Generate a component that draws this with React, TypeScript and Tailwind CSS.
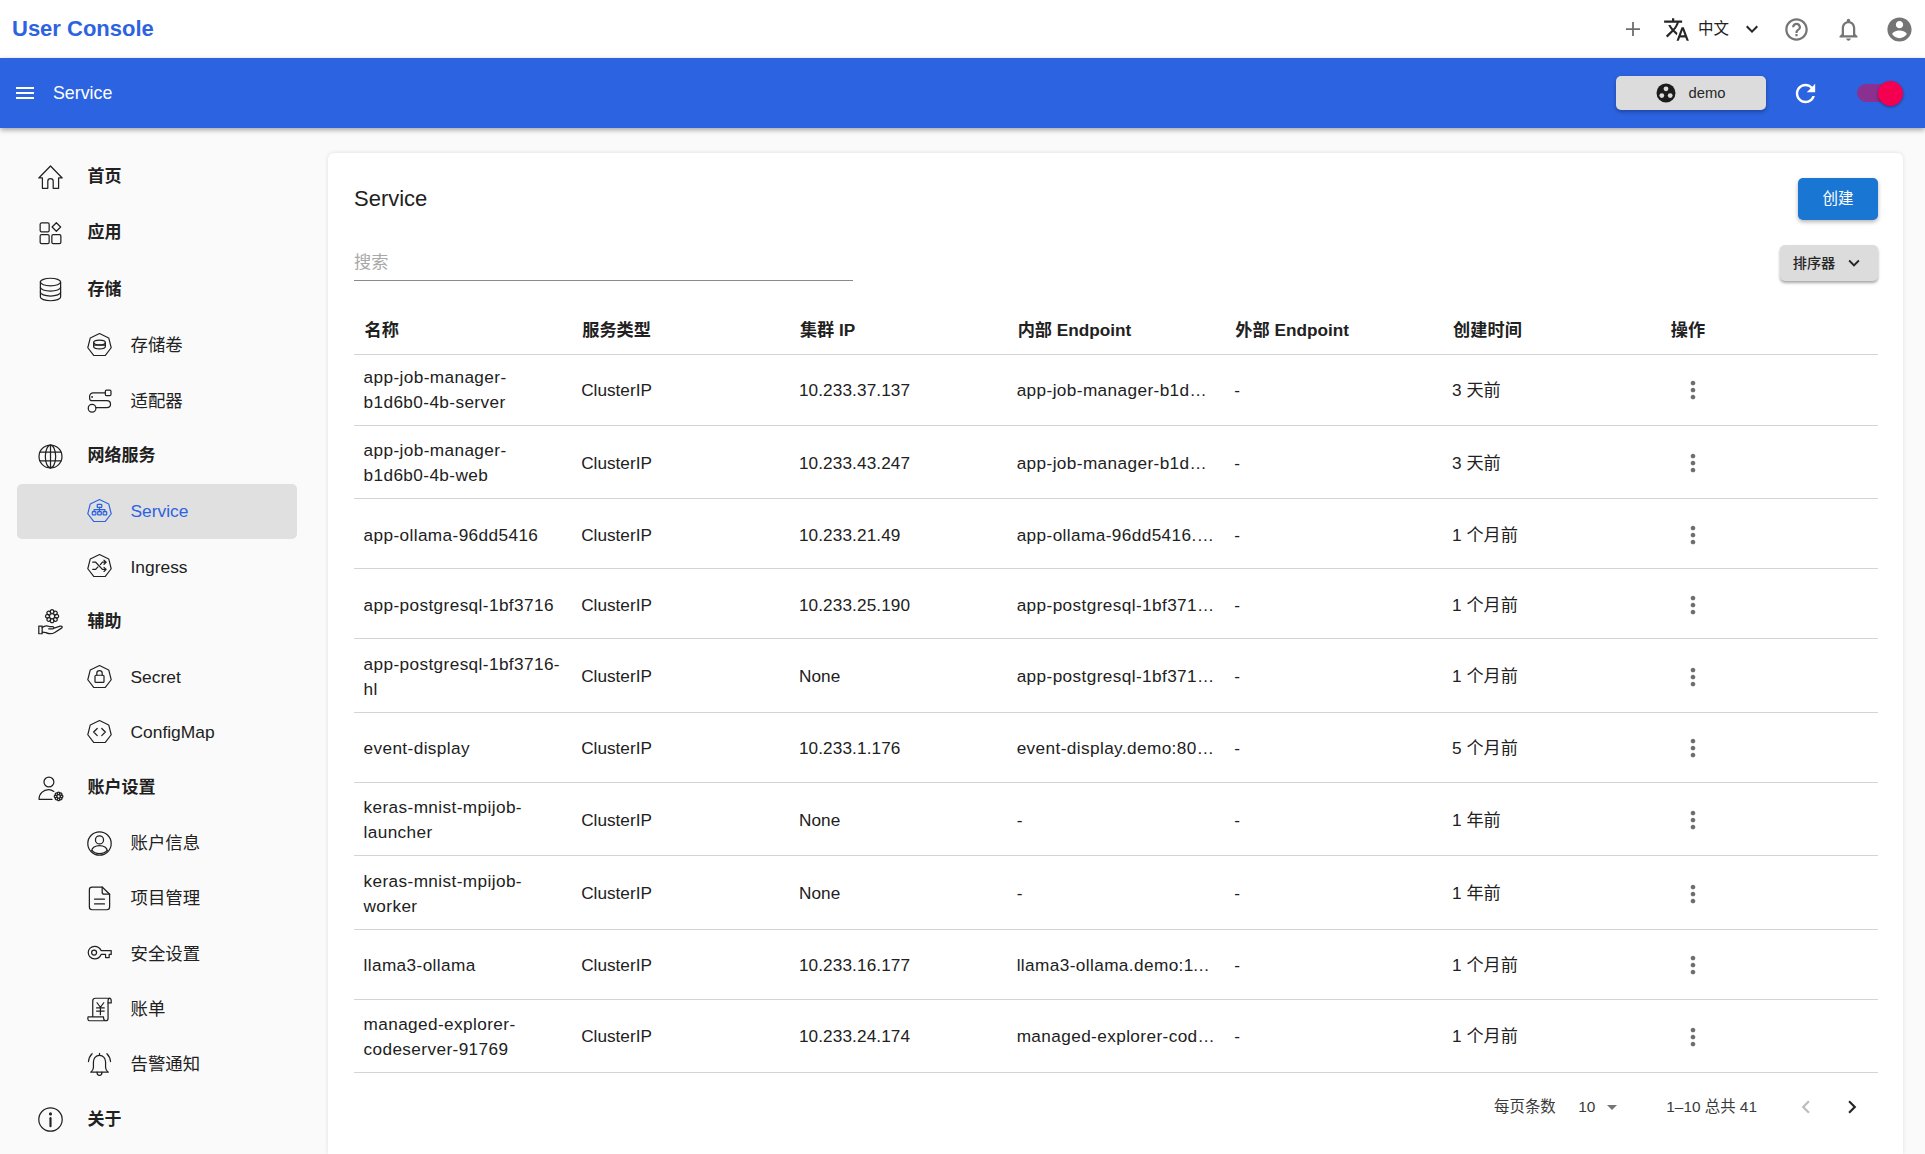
import React from "react";

const FONT = "font-['Liberation_Sans','Noto_Sans_CJK_SC',sans-serif]";

const Mui = ({ d, size = 24, className = "" }: { d: string; size?: number; className?: string }) => (
  <svg width={size} height={size} viewBox="0 0 24 24" fill="currentColor" className={`shrink-0 ${className}`}>
    <path d={d} />
  </svg>
);

const P = {
  menu: "M3 18h18v-2H3v2zm0-5h18v-2H3v2zm0-7v2h18V6H3z",
  plus: "M19 13.1h-6.1V19h-1.8v-5.9H5v-1.8h6.1V5h1.8v6.3H19z",
  translate:
    "M12.87 15.07l-2.54-2.51.03-.03c1.74-1.94 2.98-4.17 3.71-6.53H17V4h-7V2H8v2H1v1.99h11.17C11.5 7.92 10.44 9.75 9 11.35 8.07 10.32 7.3 9.19 6.69 8h-2c.73 1.63 1.73 3.17 2.98 4.56l-5.09 5.02L4 19l5-5 3.11 3.11.76-2.04zM18.5 10h-2L12 22h2l1.12-3h4.75L21 22h2l-4.5-12zm-2.62 7l1.62-4.33L19.12 17h-3.24z",
  expand: "M16.59 8.59L12 13.17 7.41 8.59 6 10l6 6 6-6z",
  help: "M11 18h2v-2h-2v2zm1-16C6.48 2 2 6.48 2 12s4.48 10 10 10 10-4.48 10-10S17.52 2 12 2zm0 18c-4.41 0-8-3.59-8-8s3.59-8 8-8 8 3.59 8 8-3.59 8-8 8zm0-14c-2.21 0-4 1.79-4 4h2c0-1.1.9-2 2-2s2 .9 2 2c0 2-3 1.75-3 5h2c0-2.25 3-2.5 3-5 0-2.21-1.79-4-4-4z",
  bell: "M12 22c1.1 0 2-.9 2-2h-4c0 1.1.89 2 2 2zm6-6v-5c0-3.07-1.64-5.64-4.5-6.32V4c0-.83-.67-1.5-1.5-1.5s-1.5.67-1.5 1.5v.68C7.63 5.36 6 7.92 6 11v5l-2 2v1h16v-1l-2-2zm-2 1H8v-6c0-2.48 1.51-4.5 4-4.5s4 2.02 4 4.5v6z",
  account:
    "M12 2C6.48 2 2 6.48 2 12s4.48 10 10 10 10-4.48 10-10S17.52 2 12 2zm0 3c1.66 0 3 1.34 3 3s-1.34 3-3 3-3-1.34-3-3 1.34-3 3-3zm0 14.2c-2.5 0-4.71-1.28-6-3.22.03-1.99 4-3.08 6-3.08 1.99 0 5.97 1.09 6 3.08-1.29 1.94-3.5 3.22-6 3.22z",
  refresh:
    "M17.65 6.35C16.2 4.9 14.21 4 12 4c-4.42 0-7.99 3.58-7.99 8s3.57 8 7.99 8c3.73 0 6.84-2.55 7.73-6h-2.08c-.82 2.33-3.04 4-5.65 4-3.31 0-6-2.69-6-6s2.69-6 6-6c1.66 0 3.14.69 4.22 1.78L13 11h7V4l-2.35 2.35z",
  more: "M12 8c1.1 0 2-.9 2-2s-.9-2-2-2-2 .9-2 2 .9 2 2 2zm0 2c-1.1 0-2 .9-2 2s.9 2 2 2 2-.9 2-2-.9-2-2-2zm0 6c-1.1 0-2 .9-2 2s.9 2 2 2 2-.9 2-2-.9-2-2-2z",
  drop: "M7 10l5 5 5-5z",
  prev: "M15.41 7.41L14 6l-6 6 6 6 1.41-1.41L10.83 12z",
  next: "M10 6L8.59 7.41 13.17 12l-4.58 4.59L10 18l6-6z",
};

const Line = ({ children, size = 27 }: { children: React.ReactNode; size?: number }) => (
  <svg
    width={size}
    height={size}
    viewBox="0 0 24 24"
    fill="none"
    stroke="currentColor"
    strokeWidth={1.1}
    strokeLinecap="round"
    strokeLinejoin="round"
    className="shrink-0"
  >
    {children}
  </svg>
);

const Hepta = () => <path d="M12 1.4 20.2 5.3 22.4 14 17 20.9 7 20.9 1.6 14 3.8 5.3Z" strokeWidth={1.05} />;

const Gear = ({ cx, cy, r }: { cx: number; cy: number; r: number }) => (
  <g>
    <circle cx={cx} cy={cy} r={r * 0.4} />
    {[0, 45, 90, 135, 180, 225, 270, 315].map((a) => (
      <path
        key={a}
        d={`M${cx + r * 0.55 * Math.cos(((a - 20) * Math.PI) / 180)} ${cy + r * 0.55 * Math.sin(((a - 20) * Math.PI) / 180)}A${r * 0.28} ${r * 0.28} 0 1 1 ${cx + r * 0.55 * Math.cos(((a + 20) * Math.PI) / 180)} ${cy + r * 0.55 * Math.sin(((a + 20) * Math.PI) / 180)}`}
      />
    ))}
  </g>
);

const icons: Record<string, React.ReactNode> = {
  home: (
    <Line>
      <path d="M12 1.8 1.6 12.4H4.8V21.6H9.6V15.4a2.4 2.4 0 0 1 4.8 0V21.6H19.2V12.4H22.4Z" />
    </Line>
  ),
  apps: (
    <Line>
      <rect x="2.8" y="2.6" width="8" height="8" rx="1.2" />
      <rect x="2.8" y="13" width="8" height="8" rx="1.2" />
      <rect x="13.2" y="13" width="8" height="8" rx="1.2" />
      <path d="M17.2 2.4 21 6.2 17.2 10 13.4 6.2Z" />
    </Line>
  ),
  db: (
    <Line>
      <ellipse cx="12" cy="5.4" rx="9" ry="3.4" />
      <path d="M3 5.4V18.6C3 20.5 7 22 12 22s9-1.5 9-3.4V5.4" />
      <path d="M3 10C3 11.9 7 13.4 12 13.4s9-1.5 9-3.4" />
      <path d="M3 14.4C3 16.3 7 17.8 12 17.8s9-1.5 9-3.4" />
    </Line>
  ),
  pv: (
    <Line>
      <Hepta />
      <ellipse cx="12" cy="9.4" rx="5.2" ry="2.1" />
      <path d="M6.8 9.4v3.4c0 1.2 2.3 2.1 5.2 2.1s5.2-.9 5.2-2.1V9.4" />
      <path d="M6.8 11.6h10.4" />
    </Line>
  ),
  adapter: (
    <Line>
      <rect x="17.2" y="1.8" width="5" height="5" rx="1" />
      <path d="M17.2 4.3H6.4a3.2 3.2 0 0 0-3.2 3.2V9c0 1.2 1 2.2 2.2 2.2H18.4c1.9 0 3.4 1.4 3.4 3.2s-1.5 3-3.4 3H8.8" />
      <circle cx="5.4" cy="18" r="3.4" />
      <circle cx="5.4" cy="8" r=".3" />
    </Line>
  ),
  globe: (
    <Line>
      <circle cx="12" cy="12" r="10.2" />
      <ellipse cx="12" cy="12" rx="4.6" ry="10.2" />
      <path d="M12 1.8V22.2M2.6 8.2H21.4M2.6 15.8H21.4" />
    </Line>
  ),
  service: (
    <Line>
      <Hepta />
      <rect x="10" y="5.6" width="4" height="2.8" rx=".5" />
      <rect x="5.6" y="12.2" width="3.2" height="2.8" rx=".5" />
      <rect x="10.4" y="12.2" width="3.2" height="2.8" rx=".5" />
      <rect x="15.2" y="12.2" width="3.2" height="2.8" rx=".5" />
      <path d="M12 8.4V12.2M7.2 12.2V10.3H16.8V12.2" />
    </Line>
  ),
  ingress: (
    <Line>
      <Hepta />
      <path d="M6 8.2H8.6L14.6 14.6H17.8M6 14.6H8.6L10.6 12.4M12.8 10.4 14.6 8.2H17.8M16 6.4 17.9 8.2 16 10M16 12.8 17.9 14.6 16 16.4" />
    </Line>
  ),
  hand: (
    <Line>
      <Gear cx={13.4} cy={6.4} r={5.8} />
      <path d="M1.6 15.2H4.6V22H1.6Z" />
      <path d="M4.6 16.4C6.8 14.6 9 14.6 11 15.6H14C15.2 15.6 15.2 17.6 14 17.6H10.4M14.6 17.2 20.6 15.2C22.4 14.8 23 16.2 21.8 17L15.8 20.8C13.2 22.4 10 22 8 21L4.6 20.6" />
    </Line>
  ),
  secret: (
    <Line>
      <Hepta />
      <rect x="8" y="10" width="8" height="6.4" rx=".8" />
      <path d="M9.6 10V8.2a2.4 2.4 0 0 1 4.8 0V10" />
    </Line>
  ),
  config: (
    <Line>
      <Hepta />
      <path d="M10 8.4 6.8 11.6 10 14.8M14 8.4 17.2 11.6 14 14.8" />
    </Line>
  ),
  userGear: (
    <Line>
      <circle cx="10.6" cy="6.2" r="4.4" />
      <path d="M15 14.6C13.6 13.6 12 13 10.4 13 5.6 13 1.8 16.6 1.8 21.6H13.4" />
      <Gear cx={19.2} cy={19} r={3.8} />
    </Line>
  ),
  userCircle: (
    <Line>
      <circle cx="12" cy="12" r="10.4" />
      <circle cx="12" cy="8.8" r="3.6" />
      <path d="M5.2 18.2C5.2 15.8 8.2 13.8 12 13.8s6.8 2 6.8 4.4" />
      <path d="M5.2 18.2C7 20.4 9.4 21 12 21s5-.6 6.8-2.8" />
    </Line>
  ),
  file: (
    <Line>
      <path d="M14.4 1.8H5.4C4 1.8 3 2.8 3 4.2V19.6C3 21 4 22 5.4 22H18.6C20 22 21 21 21 19.6V8.2Z" />
      <path d="M14.4 1.8V6.4C14.4 7.4 15.2 8.2 16.2 8.2H21" />
      <path d="M7.6 12.6H16.4M7.6 16.8H16.4" />
    </Line>
  ),
  key: (
    <Line>
      <path d="M13.4 9.4H22.4V12.8H20.6V15.6H17.4V12.8H13.4C12.4 15.2 10.2 16.8 7.6 16.8A5.6 5.6 0 0 1 7.6 5.6C10.2 5.6 12.4 7 13.4 9.4Z" />
      <circle cx="7.2" cy="11.2" r="2.2" />
    </Line>
  ),
  bill: (
    <Line>
      <path d="M6 18.6V4.4C6 3 7 2 8.4 2H21.6C20.4 2 19.6 3 19.6 4.2V20C19.6 21.2 18.6 22 17.4 22H3C1.8 22 1.4 20.4 1.8 18.6H15.6C15.4 20 15.8 21.6 17.4 22" />
      <path d="M19.6 6.2H22.4V4.2C22.4 3 21.6 2 20.8 2" />
      <path d="M9.8 6 12.8 10 15.8 6M9.4 10.6H16.2M9.4 13.4H16.2M12.8 10V16.6" />
    </Line>
  ),
  alarm: (
    <Line>
      <path d="M12 3.8C8.6 3.8 6.6 6.6 6.6 9.8V14.6C6.6 16.4 5.6 17.6 4.2 18.8H19.8C18.4 17.6 17.4 16.4 17.4 14.6V9.8C17.4 6.6 15.4 3.8 12 3.8Z" />
      <path d="M12 2.2V3.8M9.8 18.8C9.8 22.6 14.2 22.6 14.2 18.8" />
      <path d="M5.4 2.4C3.4 4.4 2.4 6.8 2.2 9.4M18.6 2.4C20.6 4.4 21.6 6.8 21.8 9.4" />
    </Line>
  ),
  info: (
    <Line>
      <circle cx="12" cy="12" r="10.4" />
      <path d="M12 10.8V18" strokeWidth={1.9} />
      <circle cx="12" cy="7" r=".7" strokeWidth={1.3} />
    </Line>
  ),
};

type Item = { label: string; icon: string; sub?: boolean; active?: boolean; tall?: boolean };

const nav: Item[] = [
  { label: "首页", icon: "home", tall: true },
  { label: "应用", icon: "apps", tall: true },
  { label: "存储", icon: "db", tall: true },
  { label: "存储卷", icon: "pv", sub: true },
  { label: "适配器", icon: "adapter", sub: true },
  { label: "网络服务", icon: "globe" },
  { label: "Service", icon: "service", sub: true, active: true },
  { label: "Ingress", icon: "ingress", sub: true },
  { label: "辅助", icon: "hand" },
  { label: "Secret", icon: "secret", sub: true },
  { label: "ConfigMap", icon: "config", sub: true },
  { label: "账户设置", icon: "userGear" },
  { label: "账户信息", icon: "userCircle", sub: true },
  { label: "项目管理", icon: "file", sub: true },
  { label: "安全设置", icon: "key", sub: true },
  { label: "账单", icon: "bill", sub: true },
  { label: "告警通知", icon: "alarm", sub: true },
  { label: "关于", icon: "info" },
];

const rows = [
  ["app-job-manager-b1d6b0-4b-server", "10.233.37.137", "app-job-manager-b1d6b0-4b-server.demo:8080", "3 天前"],
  ["app-job-manager-b1d6b0-4b-web", "10.233.43.247", "app-job-manager-b1d6b0-4b-web.demo:8080", "3 天前"],
  ["app-ollama-96dd5416", "10.233.21.49", "app-ollama-96dd5416.demo:11434", "1 个月前"],
  ["app-postgresql-1bf3716", "10.233.25.190", "app-postgresql-1bf3716.demo:5432", "1 个月前"],
  ["app-postgresql-1bf3716-hl", "None", "app-postgresql-1bf3716-hl.demo:5432", "1 个月前"],
  ["event-display", "10.233.1.176", "event-display.demo:80.svc.cluster", "5 个月前"],
  ["keras-mnist-mpijob-launcher", "None", "-", "1 年前"],
  ["keras-mnist-mpijob-worker", "None", "-", "1 年前"],
  ["llama3-ollama", "10.233.16.177", "llama3-ollama.demo:11434", "1 个月前"],
  ["managed-explorer-codeserver-91769", "10.233.24.174", "managed-explorer-codeserver-91769.demo:80", "1 个月前"],
];

const heads = ["名称", "服务类型", "集群 IP", "内部 Endpoint", "外部 Endpoint", "创建时间", "操作"];

export default function App() {
  return (
    <div className={`${FONT} h-screen overflow-hidden bg-[#fafafa] text-[17.2px] leading-[24.6px] text-[#212121] flex flex-col`}>
      {/* top bar */}
      <header className="h-[58px] bg-white flex items-center pl-[12px] pr-[11px] shrink-0">
        <span className="text-[22px] font-bold text-[#2c63e0]">User Console</span>
        <div className="ml-auto flex items-center">
          <Mui d={P.plus} size={24} className="text-[#6e6e6e]" />
          <Mui d={P.translate} size={27} className="text-[#262626] ml-[18px]" />
          <span className="text-[15.5px] ml-[8px]">中文</span>
          <Mui d={P.expand} size={24} className="text-[#262626] ml-[11px]" />
          <Mui d={P.help} size={27} className="text-[#757575] ml-[19px]" />
          <Mui d={P.bell} size={27} className="text-[#757575] ml-[25px]" />
          <Mui d={P.account} size={29} className="text-[#757575] ml-[23px]" />
        </div>
      </header>

      {/* blue bar */}
      <div className="relative z-10 h-[70px] bg-[#2c63e0] text-white flex items-center pl-[13px] pr-[22px] shrink-0 shadow-[0_2px_5px_rgba(0,0,0,0.35)]">
        <Mui d={P.menu} size={24} />
        <span className="ml-[16px] text-[17.8px]">Service</span>
        <button className="ml-auto w-[150px] h-[34px] rounded-[5px] bg-[#dcdcdc] text-[#262626] flex items-center justify-center gap-[12px] text-[14.8px] shadow-[0_2px_4px_rgba(0,0,0,0.3)]">
          <svg width="20" height="20" viewBox="0 0 20 20" className="shrink-0">
            <circle cx="10" cy="10" r="9.5" fill="#1c1c1c" />
            <circle cx="10" cy="5.8" r="2.4" fill="#dcdcdc" />
            <circle cx="5.8" cy="12.6" r="2.4" fill="#dcdcdc" />
            <circle cx="14.2" cy="12.6" r="2.4" fill="#dcdcdc" />
          </svg>
          demo
        </button>
        <Mui d={P.refresh} size={29} className="ml-[25px]" />
        <div className="relative ml-[37px] w-[46px] h-[18px] rounded-full bg-[#8b3090]">
          <span className="absolute right-0 top-[-3.5px] w-[25px] h-[25px] rounded-full bg-[#f50050] shadow-[0_1px_3px_rgba(0,0,0,0.4)]" />
        </div>
      </div>

      <div className="flex flex-1 min-h-0">
        {/* sidebar */}
        <nav className="w-[328px] shrink-0 pt-[21.5px]">
          {nav.map((it) => (
            <div
              key={it.label}
              className={`flex items-center ${it.tall ? "h-[56.2px]" : "h-[55.3px]"} ${
                it.sub ? "ml-[17px] w-[280px] pl-[68.5px]" : "pl-[36.5px]"
              } ${it.active ? "bg-[#e0e0e0] rounded-[5px] text-[#2c63e0]" : ""}`}
            >
              <span className="w-[27px] flex justify-center">{icons[it.icon]}</span>
              <span
                className={`${it.sub ? "ml-[18px] text-[17.4px]" : "ml-[24px] font-semibold text-[17px]"} whitespace-nowrap`}
              >
                {it.label}
              </span>
            </div>
          ))}
        </nav>

        {/* card */}
        <main className="flex-1 mt-[25px] mr-[22px] bg-white rounded-t-[6px] shadow-[0_0_4px_rgba(0,0,0,0.12)] pl-[26px] pr-[25px] min-w-0">
          <div className="flex items-start justify-between pt-[25px] h-[92px]">
            <h1 className="text-[22px] leading-[42px]">Service</h1>
            <button className="w-[80px] h-[42px] rounded-[5px] bg-[#1976d2] text-white text-[15.5px] shadow-[0_2px_4px_rgba(0,0,0,0.3)]">
              创建
            </button>
          </div>

          <div className="flex items-start justify-between h-[70px]">
            <div className="w-[499px] h-[35.5px] border-b border-[#8a8a8a] text-[#a8a8a8] text-[17.2px] leading-[24px] pt-[4.5px]">
              搜索
            </div>
            <button className="w-[98px] h-[36px] rounded-[5px] bg-[#dcdcdc] text-[#262626] flex items-center justify-center gap-[8px] text-[14.2px] font-medium shadow-[0_2px_3px_rgba(0,0,0,0.35)]">
              排序器
              <Mui d={P.expand} size={22} />
            </button>
          </div>

          {/* table */}
          <div className="grid grid-cols-7 h-[47px] border-b border-[#d4d4d4] font-semibold items-center pb-[2px] mt-[-7px]">
            {heads.map((h) => (
              <div key={h} className="pl-[10.5px] whitespace-nowrap">
                {h}
              </div>
            ))}
          </div>
          {rows.map((r, i) => (
            <div
              key={r[0]}
              className={`grid grid-cols-7 min-h-[70px] leading-[25px] border-b border-[#d4d4d4] items-center ${
                i === 0 ? "py-[10px]" : "pt-[12.4px] pb-[10px]"
              }`}
            >
              <div className="pl-[9.5px] pr-[10px] tracking-[0.4px]">{r[0]}</div>
              <div className="pl-[9.5px]">ClusterIP</div>
              <div className="pl-[9.5px] tracking-[0.1px]">{r[1]}</div>
              <div className="pl-[9.5px] pr-[10px] truncate tracking-[0.4px]">{r[2]}</div>
              <div className="pl-[9.5px]">-</div>
              <div className="pl-[9.5px]">{r[3]}</div>
              <div className="pl-[19px]">
                <Mui d={P.more} size={28} className="text-[#6e6e6e]" />
              </div>
            </div>
          ))}

          {/* pagination */}
          <div className="flex items-center h-[68px] text-[15.4px] text-[#3a3a3a]">
            <span className="ml-auto">每页条数</span>
            <span className="ml-[22.5px]">10</span>
            <Mui d={P.drop} size={24} className="text-[#757575] ml-[5px]" />
            <span className="ml-[42px]">1–10 总共 41</span>
            <Mui d={P.prev} size={26} className="text-[#bdbdbd] ml-[36px]" />
            <Mui d={P.next} size={26} className="text-[#262626] ml-[20px] mr-[13px]" />
          </div>
        </main>
      </div>
    </div>
  );
}
